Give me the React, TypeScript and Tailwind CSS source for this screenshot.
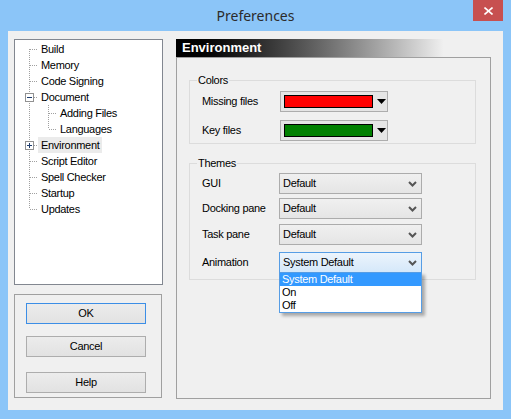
import React from "react"

type TreeItem = {
  label: string
  child?: boolean
  lastChild?: boolean
  expander?: "plus" | "minus"
  first?: boolean
  last?: boolean
  selected?: boolean
}

const tree: TreeItem[] = [
  { label: "Build", first: true },
  { label: "Memory" },
  { label: "Code Signing" },
  { label: "Document", expander: "minus" },
  { label: "Adding Files", child: true },
  { label: "Languages", child: true, lastChild: true },
  { label: "Environment", expander: "plus", selected: true },
  { label: "Script Editor" },
  { label: "Spell Checker" },
  { label: "Startup" },
  { label: "Updates", last: true },
]

const dot = { stroke: "#a0a0a0", strokeWidth: 1, strokeDasharray: "1 1" }

function TreeLines({ item }: { item: TreeItem }) {
  if (item.child) {
    return (
      <svg width="42" height="16" className="shrink-0">
        <line x1="14.5" y1="0" x2="14.5" y2="16" {...dot} />
        <line x1="33.5" y1="0" x2="33.5" y2={item.lastChild ? 8 : 16} {...dot} />
        <line x1="34" y1="8.5" x2="42" y2="8.5" {...dot} />
      </svg>
    )
  }
  return (
    <svg width="23" height="16" className="shrink-0">
      <line x1="14.5" y1={item.first ? 8 : 0} x2="14.5" y2={item.last ? 8 : 16} {...dot} />
      <line x1="15" y1="8.5" x2="23" y2="8.5" {...dot} />
      {item.expander && (
        <g>
          <rect x="10.5" y="4.5" width="8" height="8" fill="#ffffff" stroke="#919191" />
          <line x1="12" y1="8.5" x2="17" y2="8.5" stroke="#1e3d6e" />
          {item.expander === "plus" && (
            <line x1="14.5" y1="6" x2="14.5" y2="11" stroke="#1e3d6e" />
          )}
        </g>
      )}
    </svg>
  )
}

function Chevron() {
  return (
    <svg width="9" height="6" viewBox="0 0 9 6" className="shrink-0">
      <polyline points="1,1 4.5,4.5 8,1" fill="none" stroke="#555555" strokeWidth="2" />
    </svg>
  )
}

function ColorCombo({ color }: { color: string }) {
  return (
    <div className="w-[108px] h-[21px] border border-[#adadad] bg-[#e5e5e5] flex items-center">
      <div className="ml-[3px] w-[89px] h-[13px] border border-black" style={{ backgroundColor: color }} />
      <svg width="9" height="5" viewBox="0 0 9 5" className="ml-[4px]">
        <polygon points="0,0 9,0 4.5,5" fill="#000000" />
      </svg>
    </div>
  )
}

function ThemeCombo({ value, active }: { value: string; active?: boolean }) {
  return (
    <div
      className={
        active
          ? "relative w-[143px] h-[21px] border border-[#569de5] bg-gradient-to-b from-[#ecf4fc] to-[#d5e8fa] flex items-center justify-between pl-[3px] pr-[4px]"
          : "relative w-[143px] h-[21px] border border-[#acacac] bg-gradient-to-b from-[#f0f0f0] to-[#e5e5e5] flex items-center justify-between pl-[3px] pr-[4px]"
      }
    >
      <span>{value}</span>
      <Chevron />
      {active && (
        <div className="absolute left-[-1px] top-full w-[143px] bg-white border border-[#569de5] shadow-[3px_3px_3px_rgba(0,0,0,0.3)] z-10">
          <div className="h-[13px] leading-[13px] pl-[2px] bg-[#3399ff] text-white">System Default</div>
          <div className="h-[13px] leading-[13px] pl-[2px]">On</div>
          <div className="h-[13px] leading-[13px] pl-[2px]">Off</div>
        </div>
      )}
    </div>
  )
}

function ThemeRow({ label, value, className, active }: { label: string; value: string; className: string; active?: boolean }) {
  return (
    <div className={"flex items-center " + className}>
      <span className="w-[89px] pl-[12px]">{label}</span>
      <ThemeCombo value={value} active={active} />
    </div>
  )
}

function Button({ label, focused, className }: { label: string; focused?: boolean; className: string }) {
  return (
    <button
      className={
        (focused ? "border-[#3c8ee6] " : "border-[#adadad] ") +
        "w-[120px] h-[21px] border bg-gradient-to-b from-[#ececec] to-[#e2e2e2] flex items-center justify-center text-black " +
        className
      }
    >
      {label}
    </button>
  )
}

export default function App() {
  return (
    <div className="w-[511px] h-[419px] bg-[#8bc5f8] flex flex-col overflow-hidden">
      {/* Title bar */}
      <div className="h-[31px] relative flex items-center justify-center shrink-0">
        <span className="text-[14px] text-[#2b2b2b] font-['Noto_Sans',sans-serif] pb-[1px]">Preferences</span>
        <button className="absolute right-[8px] top-0 w-[30px] h-[21px] bg-[#c75050] flex items-center justify-center">
          <svg width="9" height="8" viewBox="0 0 9 8">
            <line x1="0.5" y1="0.5" x2="8.5" y2="7.5" stroke="#ffffff" strokeWidth="1.6" />
            <line x1="8.5" y1="0.5" x2="0.5" y2="7.5" stroke="#ffffff" strokeWidth="1.6" />
          </svg>
        </button>
      </div>

      {/* Client area */}
      <div className="mx-[8px] mb-[9px] flex-1 bg-[#f0f0f0] flex pt-[8px] pl-[6px] text-[11px] tracking-[-0.3px] text-black font-['Liberation_Sans',Arial,sans-serif]">
        {/* Left column */}
        <div className="w-[149px] flex flex-col">
          <div className="h-[246px] bg-white border border-[#828790] pt-[1px]">
            {tree.map((item) => (
              <div key={item.label} className="flex h-[16px] items-stretch">
                <TreeLines item={item} />
                <span className={"px-[3px] leading-[16px] " + (item.selected ? "bg-[#ebebeb]" : "")}>
                  {item.label}
                </span>
              </div>
            ))}
          </div>
          <div className="mt-[9px] w-[148px] h-[104px] border border-[#a0a0a0] flex flex-col pl-[11px] pt-[8px]">
            <Button label="OK" focused className="" />
            <Button label="Cancel" className="mt-[12px]" />
            <Button label="Help" className="mt-[15px]" />
          </div>
        </div>

        {/* Right column */}
        <div className="ml-[13px] w-[315px] flex flex-col">
          <div className="h-[18px] bg-gradient-to-r from-[#000000] to-[#f0f0f0] to-85% flex items-center pl-[6px]">
            <span className="text-white font-bold text-[13px] tracking-normal">Environment</span>
          </div>
          <div className="h-[342px] border border-[#a0a0a0] flex flex-col pl-[12px]">
            <fieldset className="mt-[16px] w-[287px] border border-[#dcdcdc] pb-[2px]">
              <legend className="ml-[7px] px-[1px] leading-[13px]">Colors</legend>
              <div className="flex items-center mt-[4px]">
                <span className="w-[90px] pl-[12px]">Missing files</span>
                <ColorCombo color="#ff0000" />
              </div>
              <div className="flex items-center mt-[8px]">
                <span className="w-[90px] pl-[12px]">Key files</span>
                <ColorCombo color="#008000" />
              </div>
            </fieldset>
            <fieldset className="mt-[13px] w-[287px] border border-[#dcdcdc] pb-[6px]">
              <legend className="ml-[7px] px-[1px] leading-[13px]">Themes</legend>
              <ThemeRow label="GUI" value="Default" className="mt-[3px]" />
              <ThemeRow label="Docking pane" value="Default" className="mt-[4px]" />
              <ThemeRow label="Task pane" value="Default" className="mt-[5px]" />
              <ThemeRow label="Animation" value="System Default" className="mt-[7px]" active />
            </fieldset>
          </div>
        </div>
      </div>
    </div>
  )
}
